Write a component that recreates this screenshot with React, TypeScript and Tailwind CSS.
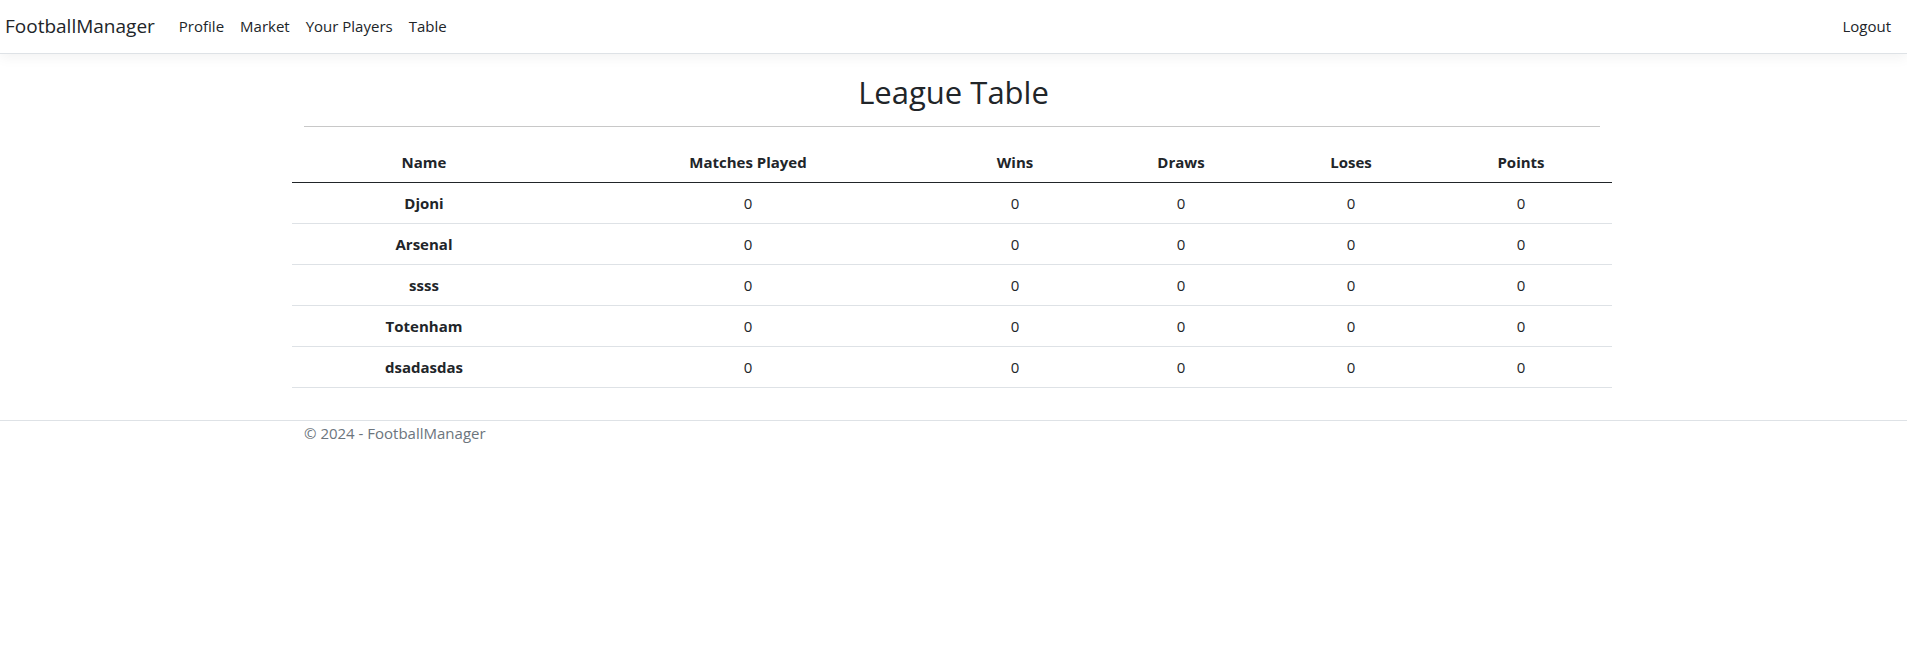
import React from 'react'

type Team = {
  name: string
  played: number
  wins: number
  draws: number
  loses: number
  points: number
}

const teams: Team[] = [
  { name: 'Djoni', played: 0, wins: 0, draws: 0, loses: 0, points: 0 },
  { name: 'Arsenal', played: 0, wins: 0, draws: 0, loses: 0, points: 0 },
  { name: 'ssss', played: 0, wins: 0, draws: 0, loses: 0, points: 0 },
  { name: 'Totenham', played: 0, wins: 0, draws: 0, loses: 0, points: 0 },
  { name: 'dsadasdas', played: 0, wins: 0, draws: 0, loses: 0, points: 0 },
]

const font = { fontFamily: '"Open Sans", "Noto Sans", sans-serif' }

function NavBar() {
  return (
    <nav className="h-[54px] flex items-center pl-[5px] pr-2 pb-[2px] bg-white border-b border-[#dee2e6] shadow-[0_4px_12px_rgba(0,0,0,0.05)]">
      <a className="text-[19px] leading-[30px] text-[#212529] mr-4 cursor-pointer">FootballManager</a>
      <ul className="flex items-center text-[15px] leading-6 text-[#212529]">
        <li><a className="px-2 py-2 cursor-pointer">Profile</a></li>
        <li><a className="px-2 py-2 cursor-pointer">Market</a></li>
        <li><a className="px-2 py-2 cursor-pointer">Your Players</a></li>
        <li><a className="px-2 py-2 cursor-pointer">Table</a></li>
      </ul>
      <a className="ml-auto px-2 py-2 text-[15px] leading-6 text-[#212529] cursor-pointer">Logout</a>
    </nav>
  )
}

function LeagueTable() {
  return (
    <table className="w-full table-fixed text-[15px] leading-6 text-[#212529]">
      <colgroup>
        <col className="w-[264px]" />
        <col className="w-[384px]" />
        <col className="w-[150px]" />
        <col className="w-[182px]" />
        <col className="w-[158px]" />
        <col className="w-[182px]" />
      </colgroup>
      <thead>
        <tr>
          {['Name', 'Matches Played', 'Wins', 'Draws', 'Loses', 'Points'].map((h) => (
            <th key={h} className="px-2 py-2 text-center font-bold border-b border-[#212529]">
              {h}
            </th>
          ))}
        </tr>
      </thead>
      <tbody>
        {teams.map((t) => (
          <tr key={t.name}>
            <th className="px-2 py-2 text-center font-bold border-b border-[#dee2e6]">{t.name}</th>
            <td className="px-2 py-2 text-center border-b border-[#dee2e6]">{t.played}</td>
            <td className="px-2 py-2 text-center border-b border-[#dee2e6]">{t.wins}</td>
            <td className="px-2 py-2 text-center border-b border-[#dee2e6]">{t.draws}</td>
            <td className="px-2 py-2 text-center border-b border-[#dee2e6]">{t.loses}</td>
            <td className="px-2 py-2 text-center border-b border-[#dee2e6]">{t.points}</td>
          </tr>
        ))}
      </tbody>
    </table>
  )
}

export default function App() {
  return (
    <div className="min-h-screen bg-white" style={font}>
      <NavBar />

      <main className="ml-[292px] w-[1320px] pt-[19px] pb-[32px]">
        <h2 className="text-center text-[31px] leading-[38px] font-normal text-[#212529] pl-[3px]">League Table</h2>
        <div className="mx-3 mt-[15px] h-px bg-[#c8c8c8]" />
        <div className="mt-[15px]">
          <LeagueTable />
        </div>
      </main>

      <footer className="border-t border-[#dee2e6]">
        <div className="ml-[292px] w-[1320px] px-3 leading-6 text-[15px] text-[#6c757d]">
          © 2024 - FootballManager
        </div>
      </footer>
    </div>
  )
}
